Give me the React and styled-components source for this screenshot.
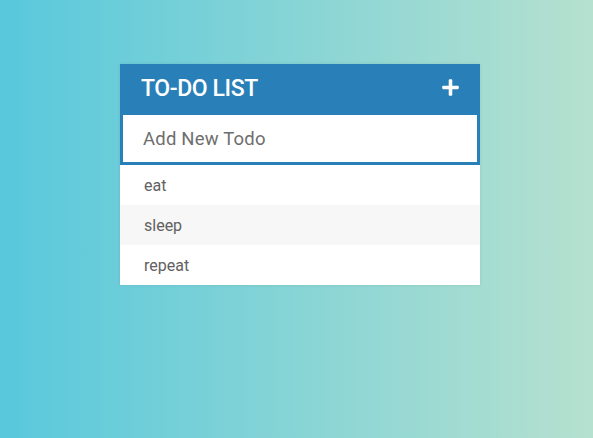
import React from "react";
import styled, { createGlobalStyle } from "styled-components";
import { FaPlus } from "react-icons/fa";

const GlobalStyle = createGlobalStyle`
  * { box-sizing: border-box; }
  html, body { margin: 0; padding: 0; height: 100%; }
  body { font-family: Roboto, "Liberation Sans", sans-serif; }
  #root { min-height: 100vh; }
`;

const Page = styled.div`
  min-height: 100vh;
  background: linear-gradient(to right, #58c8dc 0%, #b6e1cf 100%);
  padding: 64px 0 0 120px;
`;

const Card = styled.div`
  width: 360px;
  background: #fff;
  box-shadow: 0 0 3px rgba(0, 0, 0, 0.1);
`;

const Header = styled.div`
  height: 48px;
  background: #2980b9;
  display: flex;
  align-items: center;
  justify-content: space-between;
  padding: 0 20px 0 21px;
  color: #fff;
`;

const Title = styled.h1`
  margin: 0;
  font-family: Roboto, "Liberation Sans", sans-serif;
  font-weight: 500;
  font-size: 23px;
  letter-spacing: -0.4px;
`;

const AddButton = styled.span`
  display: flex;
  align-items: center;
  font-size: 19px;
  margin-top: -2px;
`;

const Input = styled.input`
  display: block;
  width: 100%;
  height: 53px;
  border: 3px solid #2980b9;
  padding: 0 20px;
  font-family: Roboto, "Liberation Sans", sans-serif;
  font-size: 18.5px;
  letter-spacing: 0.2px;
  color: #666;
  outline: none;
  background: #fff;
  &::placeholder { color: #6e6e6e; opacity: 1; }
`;

const List = styled.ul`
  list-style: none;
  margin: 0;
  padding: 0;
`;

const Item = styled.li`
  height: 40px;
  display: flex;
  align-items: center;
  padding: 0 24px;
  font-size: 16px;
  color: #616161;
  background: ${(p) => (p.$alt ? "#f7f7f7" : "#fff")};
`;

const todos = ["eat", "sleep", "repeat"];

export default function App() {
  return (
    <>
      <GlobalStyle />
      <Page>
        <Card>
          <Header>
            <Title>TO-DO LIST</Title>
            <AddButton><FaPlus /></AddButton>
          </Header>
          <Input type="text" placeholder="Add New Todo" />
          <List>
            {todos.map((t, i) => (
              <Item key={t} $alt={i % 2 === 1}>{t}</Item>
            ))}
          </List>
        </Card>
      </Page>
    </>
  );
}
